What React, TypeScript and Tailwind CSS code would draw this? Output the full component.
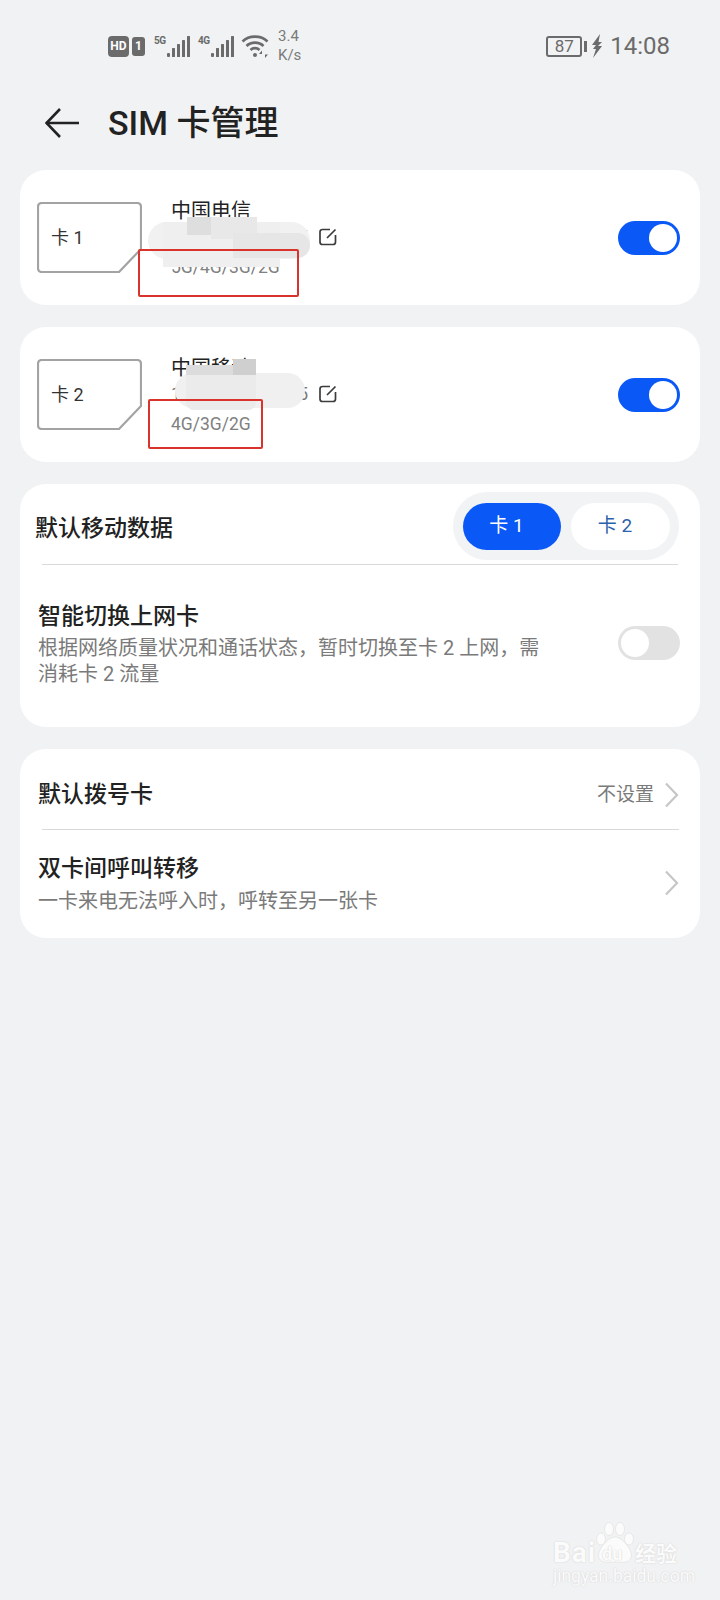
const FONT = "font-['Roboto','Noto_Sans_CJK_SC',sans-serif]";

function SignalBars() {
    return (
        <svg width="24" height="22" viewBox="0 0 24 22" fill="#6b6b6b">
            <rect x="0" y="18" width="3" height="4" rx="1" />
            <rect x="5" y="13" width="3" height="9" rx="0.5" />
            <rect x="10" y="9" width="3" height="13" rx="0.5" />
            <rect x="15" y="5" width="3" height="17" rx="0.5" />
            <rect x="20" y="1" width="3" height="21" rx="0.5" />
        </svg>
    );
}

function StatusBar() {
    return (
        <div className="h-[92px] flex items-center justify-between pl-[108px] pr-[50px] text-[#6b6b6b]">
            <div className="flex items-center">
                <div className="w-[21px] h-[21px] rounded-[4px] bg-[#6b6b6b] text-white text-[12px] font-bold leading-[21px] text-center">
                    HD
                </div>
                <div className="ml-[3px] w-[13px] h-[19px] rounded-[3px] bg-[#6b6b6b] text-white text-[12px] font-bold leading-[19px] text-center">
                    1
                </div>
                <div className="ml-[9px] flex items-end">
                    <span className="text-[10px] font-bold leading-[10px] mb-[11px] w-[13px] tracking-[-0.5px]">5G</span>
                    <SignalBars />
                </div>
                <div className="ml-[7px] flex items-end">
                    <span className="text-[10px] font-bold leading-[10px] mb-[11px] w-[13px] tracking-[-0.5px]">4G</span>
                    <SignalBars />
                </div>
                <svg className="ml-[6px]" width="29" height="24" viewBox="0 0 29 24" fill="none" stroke="#6b6b6b" strokeWidth="2.6">
                    <path d="M1.5 7.5C8 1 20 1 26.5 7.5" />
                    <path d="M5.5 12C10 7.5 18 7.5 22.5 12" />
                    <path d="M9.5 16C12 13.5 16 13.5 18.5 16" />
                    <circle cx="14" cy="21" r="2" fill="#6b6b6b" stroke="none" />
                    <path d="M21 16.5l-3 3.5h3zM24 24l3-3.500h-3z" fill="#6b6b6b" stroke="none" />
                </svg>
                <div className="ml-[8px] text-[15px] leading-[19px] text-[#7a7a7a]">
                    <div>3.4</div>
                    <div>K/s</div>
                </div>
            </div>
            <div className="flex items-center">
                <div className="w-[36px] h-[21px] border-2 border-[#6b6b6b] rounded-[3px] text-[17px] leading-[17px] text-center">
                    87
                </div>
                <div className="ml-[2px] w-[3px] h-[11px] bg-[#6b6b6b]" />
                <svg className="ml-[4px]" width="13" height="24" viewBox="0 0 13 24" fill="#6b6b6b">
                    <path d="M9 0L1 11h4L2 15h3l-3 9 9-12H7l4-4H7.500z" />
                </svg>
                <span className="ml-[6px] text-[24px] leading-[28px]">14:08</span>
            </div>
        </div>
    );
}

function Header() {
    return (
        <div className="h-[62px] flex items-center pl-[45px]">
            <svg width="34" height="30" viewBox="0 0 34 30" fill="none" stroke="#222222" strokeWidth="2.6">
                <path d="M1 15H34" />
                <path d="M15 1L1.500 15L15 29" />
            </svg>
            <h1 className="ml-[29px] text-[34px] leading-[40px] font-medium text-[#222222]">SIM 卡管理</h1>
        </div>
    );
}

function Toggle({ on }: { on: boolean }) {
    return (
        <div
            className={
                on
                    ? 'w-[62px] h-[34px] rounded-full bg-[#0a59f7] flex items-center justify-end px-[3px] shrink-0'
                    : 'w-[62px] h-[34px] rounded-full bg-[#e2e2e2] flex items-center justify-start px-[3px] shrink-0'
            }
        >
            <div className="w-[28px] h-[28px] rounded-full bg-white" />
        </div>
    );
}

function SimCard({ label }: { label: string }) {
    return (
        <div className="relative w-[105px] h-[71px] shrink-0 flex items-center pl-[14px] text-[18px] text-[#333333]">
            <svg className="absolute left-0 top-0" width="105" height="71" viewBox="0 0 105 71" fill="none" stroke="#a3a3a3" strokeWidth="2.2">
                <path d="M5 1H100Q104 1 104 5V47L82 70H5Q1 70 1 66V5Q1 1 5 1Z" />
            </svg>
            <span>{label}</span>
        </div>
    );
}

function EditIcon() {
    return (
        <svg width="18" height="18" viewBox="0 0 18 18" fill="none" stroke="#3c3c3c" strokeWidth="1.7">
            <path d="M11 1.500H3.500Q1 1.500 1 4V14Q1 16.500 3.500 16.500H14Q16.500 16.500 16.500 14V7" />
            <path d="M8 10L16.500 1.500" />
        </svg>
    );
}

function SimRow({ label, carrier, bands, children }: { label: string; carrier: string; bands: string; children: React.ReactNode }) {
    return (
        <div className="relative h-[135px] rounded-[26px] bg-white flex items-center pl-[17px] pr-[20px]">
            <SimCard label={label} />
            <div className="ml-[29px] flex-1">
                <div className="h-[28px] text-[20px] leading-[32px] text-[#222222]">{carrier}</div>
                <div className="h-[28px] flex items-center justify-between w-[166px]">
                    <div className="w-[137px] flex justify-between text-[18px] text-[#7a7a7a]">
                        <span>1</span>
                        <span>5</span>
                    </div>
                    <EditIcon />
                </div>
                <div className="h-[30px] text-[17.500px] leading-[32px] text-[#808080]">{bands}</div>
            </div>
            <Toggle on />
            {children}
        </div>
    );
}

function Chevron() {
    return (
        <svg width="15" height="26" viewBox="0 0 15 26" fill="none" stroke="#c6c6c6" strokeWidth="2.2">
            <path d="M2 1.500L13 13L2 24.500" />
        </svg>
    );
}

function Watermark() {
    return (
        <div className="absolute left-[553px] top-[1520px] w-[130px] h-[66px] text-[#fbfbfb] [text-shadow:0_0_1.500px_#c9c9c9]">
            <svg className="absolute left-[43px] top-[2px]" width="38" height="42" viewBox="0 0 38 42" fill="#fbfbfb" stroke="#dedede" strokeWidth="0.6">
                <ellipse cx="5" cy="17" rx="4.500" ry="6" />
                <ellipse cx="13" cy="7" rx="4.500" ry="6.500" />
                <ellipse cx="24" cy="7" rx="4.500" ry="6.500" />
                <ellipse cx="33" cy="17" rx="4.500" ry="6" />
                <path d="M19 15C27 15 38 30 35 36C32 42 25 40 19 40C13 40 6 42 3 36C0 30 11 15 19 15Z" />
            </svg>
            <div className="absolute left-0 top-[20px] text-[28px] leading-[26px] font-bold tracking-[1px]">Bai</div>
            <div className="absolute left-[49px] top-[26px] text-[18px] leading-[16px] font-bold">du</div>
            <div className="absolute left-[82px] top-[21px] text-[21px] leading-[26px] font-bold">经验</div>
            <div className="absolute left-0 top-[47px] text-[17.500px] leading-[18px] whitespace-nowrap">jingyan.baidu.com</div>
        </div>
    );
}

export default function App() {
    return (
        <div className={`relative w-[720px] h-[1600px] overflow-hidden bg-[#f1f2f3] ${FONT}`}>
            <StatusBar />
            <Header />

            <div className="pt-[16px] px-[20px] flex flex-col gap-[22px]">
                <SimRow label="卡 1" carrier="中国电信" bands="5G/4G/3G/2G">
                    {/* pixelated phone number */}
                    <div className="absolute left-[128px] top-[52px] w-[162px] h-[37px] rounded-full bg-[#f1f1f1]" />
                    <div className="absolute left-[143px] top-[52px] w-[117px] h-[45px] bg-[#efefef]" />
                    <div className="absolute left-[167px] top-[47px] w-[24px] h-[18px] bg-[#dedede]" />
                    <div className="absolute left-[191px] top-[47px] w-[46px] h-[22px] bg-[#e8e8e8]" />
                    <div className="absolute left-[213px] top-[63px] w-[77px] h-[25px] rounded-r-full bg-[#e6e6e6]" />
                    <div className="absolute left-[118px] top-[79px] w-[161px] h-[48px] border-2 border-[#d8342b] rounded-[2px]" />
                </SimRow>

                <SimRow label="卡 2" carrier="中国移动" bands="4G/3G/2G">
                    <div className="absolute left-[155px] top-[46px] w-[130px] h-[35px] rounded-full bg-[#f0f0f0]" />
                    <div className="absolute left-[166px] top-[45px] w-[70px] h-[38px] rounded-b-[8px] bg-[#ebebeb]" />
                    <div className="absolute left-[166px] top-[38px] w-[47px] h-[10px] bg-[#dcdcdc]" />
                    <div className="absolute left-[213px] top-[32px] w-[23px] h-[16px] bg-[#cfcfcf]" />
                    <div className="absolute left-[128px] top-[72px] w-[115px] h-[50px] border-2 border-[#d8342b] rounded-[2px]" />
                </SimRow>

                <div className="h-[243px] rounded-[26px] bg-white">
                    <div className="h-[80px] flex items-center justify-between pt-[8px] pb-[4px] pl-[15px] pr-[21px]">
                        <span className="pt-[6px] text-[23px] font-medium text-[#222222]">默认移动数据</span>
                        <div className="w-[226px] h-[68px] rounded-full bg-[#f1f3f5] flex items-center justify-center gap-[10px]">
                            <div className="w-[98px] h-[47px] pr-[10px] rounded-full bg-[#0a59f7] text-white text-[19px] flex items-center justify-center">卡 1</div>
                            <div className="w-[99px] h-[47px] pr-[10px] rounded-full bg-white text-[#2a62ab] text-[19px] flex items-center justify-center">卡 2</div>
                        </div>
                    </div>
                    <div className="ml-[22px] mr-[22px] h-px bg-[#d9d9d9]" />
                    <div className="pl-[18px] pr-[20px] pt-[34px] flex items-start justify-between">
                        <div>
                            <div className="text-[23px] leading-[36px] font-medium text-[#222222]">智能切换上网卡</div>
                            <div className="w-[510px] text-[20px] leading-[26px] text-[#7a7a7a]">
                                {'根据网络质量状况和通话状态\uFF0C暂时切换至卡 2 上网\uFF0C需消耗卡 2 流量'}
                            </div>
                        </div>
                        <div className="mt-[27px]">
                            <Toggle on={false} />
                        </div>
                    </div>
                </div>

                <div className="h-[189px] rounded-[26px] bg-white">
                    <div className="h-[80px] flex items-center justify-between pt-[12px] pl-[18px] pr-[21px]">
                        <span className="text-[23px] font-medium text-[#222222]">默认拨号卡</span>
                        <div className="flex items-center gap-[10px]">
                            <span className="text-[19px] text-[#7a7a7a]">不设置</span>
                            <Chevron />
                        </div>
                    </div>
                    <div className="ml-[22px] mr-[21px] h-px bg-[#d9d9d9]" />
                    <div className="h-[108px] flex items-center justify-between pb-[3px] pl-[18px] pr-[21px]">
                        <div>
                            <div className="text-[23px] leading-[36px] font-medium text-[#222222]">双卡间呼叫转移</div>
                            <div className="text-[20px] leading-[28px] text-[#7a7a7a]">{'一卡来电无法呼入时\uFF0C呼转至另一张卡'}</div>
                        </div>
                        <Chevron />
                    </div>
                </div>
            </div>

            <Watermark />
        </div>
    );
}
